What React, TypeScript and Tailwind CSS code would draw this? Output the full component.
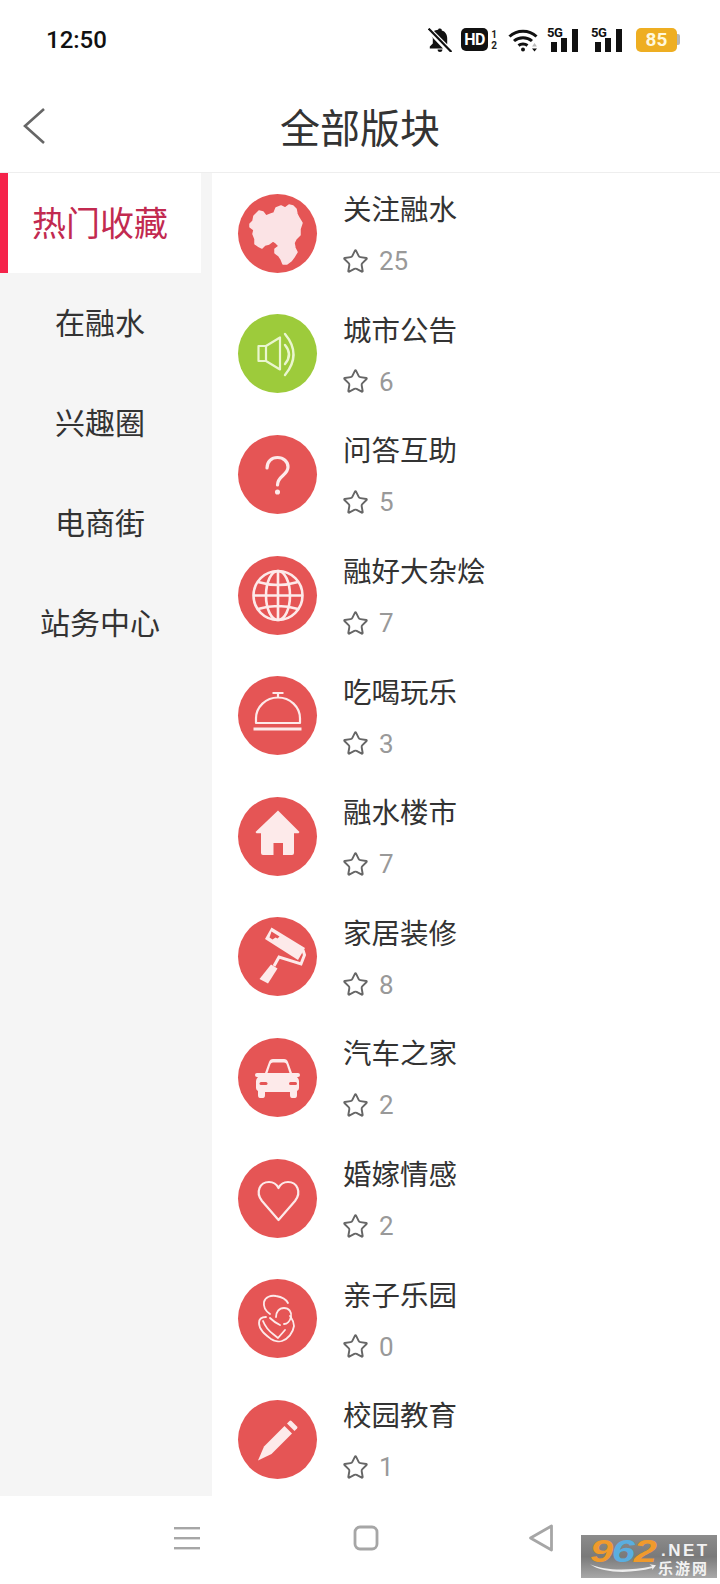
import React from 'react';
import { Star } from 'lucide-react';

const CJK = "font-['Noto_Sans_CJK_SC','Noto_Sans',sans-serif]";
const ink = '#fdeaea';

const MapIcon = () => (
  <path
    fill="#fbe3e5"
    stroke="#fbe3e5"
    strokeWidth="1.500"
    strokeLinejoin="round"
    d="M12 30L15 27 16 22 21 17 25 18 28 22 33 20 36 19 38 14 43 12 47 14 51 11 55 12 58 15 59 20 61 24 64 29 62 35 62 41 58 45 56 49 57 54 59 58 56 63 53 67 49 70 45 70 43 65 41 62 37 59 37 55 41 52 38 49 35 47 31 50 27 51 24 54 20 52 17 50 17 45 15 40 16 36 12 33z"
  />
);

const SpeakerIcon = () => (
  <g fill="none" stroke="#eaf6cf" strokeWidth="2.200">
    <path d="M20.500 32h7.500v15h-7.500zM28 32l14-8.500v32L28 47" strokeLinejoin="round" />
    <path d="M47 31q8 9.500 0 19" strokeWidth="2.400" strokeLinecap="round" />
    <path d="M47 20q17 20.500 0 41" strokeWidth="2.400" strokeLinecap="round" />
  </g>
);

const QuestionIcon = () => (
  <g fill="none" stroke={ink} strokeWidth="3.200" strokeLinecap="round">
    <path d="M29 33c0-6.500 4.500-10.500 10.500-10.500S50 26.500 50 32c0 8.500-10.500 8.500-10.500 18" />
    <circle cx="39.500" cy="57" r="1.800" fill={ink} strokeWidth="1.500" />
  </g>
);

const GlobeIcon = () => (
  <g fill="none" stroke={ink} strokeWidth="2.600">
    <circle cx="40" cy="39.500" r="24.500" />
    <ellipse cx="40" cy="39.500" rx="12" ry="24.500" />
    <path d="M40 15v49M15.500 39.500h49M20 26q20 6 40 0M20 53q20-6 40 0" />
  </g>
);

const ClocheIcon = () => (
  <g fill="none" stroke={ink} strokeWidth="2.200">
    <path d="M18 47v-4.500a22 21 0 0 1 44 0V47zM40 21.500V17M34.500 17h11" strokeLinejoin="round" />
    <path d="M15.500 53h48" strokeWidth="2.800" />
  </g>
);

const HouseIcon = () => (
  <path
    fill={ink}
    fillRule="evenodd"
    d="M40 13.500l21.500 21.500-1 1.200H56V56a2 2 0 0 1-2 2h-9V46h-9.500v12H25a2 2 0 0 1-2-2V36.200h-4.500l-1-1.200z"
  />
);

const RollerIcon = () => (
  <g fill={ink}>
    <path d="M33.500 10.500L67 31l-7 12L27 22z" />
    <path d="M33.500 14.500l8 5-2 2-2-1-3 2-3-2z" fill="#e55555" />
    <path d="M65 33l1.500 5-3.500 9L41 40l-5 9" fill="none" stroke={ink} strokeWidth="3" />
    <path d="M33 47.500l6.500 4-9.500 15-8.500-4.500z" />
  </g>
);

const CarIcon = () => (
  <g>
    <path
      fill={ink}
      d="M27 35l4-11q1-3 4-3h11q3 0 4 3l4 11h6q2 0 2 2t-2 2h-1q2 2 2 4v7q0 2-2 3v4q0 3-2 3h-3q-2 0-2-3v-3H27v3q0 3-2 3h-3q-2 0-2-3v-4q-2-1-2-3v-7q0-2 2-4h-1q-2 0-2-2t2-2z"
    />
    <path fill="#e55555" d="M29.500 35l3-9q.5-1.500 2.500-1.500h11q2 0 2.500 1.500l3 9z" />
    <rect x="21.500" y="44" width="8" height="3" rx="1.500" fill="#e55555" />
    <rect x="51" y="44" width="8" height="3" rx="1.500" fill="#e55555" />
  </g>
);

const HeartIcon = () => (
  <path
    fill="none"
    stroke={ink}
    strokeWidth="2.200"
    strokeLinejoin="round"
    d="M40.500 61L24 42C17 33 22 23 31 23c4 0 7.500 2 9.500 6 2-4 5.500-6 9.500-6 9 0 14 10 7 19z"
  />
);

const MotherIcon = () => (
  <g fill="none" stroke={ink} strokeWidth="1.800" strokeLinecap="round" strokeLinejoin="round">
    <path d="M32 35c-3-2-7-6-6-12 1-5 7-7 12-6 6 1 10 3 12 7" />
    <path d="M28 38c-4 0-7 2-7 6 0 7 7 12 12 16 3 2 8 3 11 2 6-2 11-8 12-15 0-5-2-7-4-10" />
    <path d="M25 42c2 5 6 10 10 13l5 4 7-8" />
    <path d="M38 38c0-5 3-9 8-9 5 0 8 4 7 9-1 4-4 7-7 7" />
    <path d="M32 39c3 3 6 5 10 7" />
  </g>
);

const PencilIcon = () => (
  <g fill={ink}>
    <path d="M46.500 26L54 33.500 33.500 54 20 60.500l6-14z" />
    <path d="M49 23.500l2.500-2.500q1-1 2 0l5.500 5.500q1 1 0 2L56.500 31z" />
  </g>
);

const sections = [
  { name: '关注融水', count: 25, bg: 'bg-[#e55555]', icon: <MapIcon /> },
  { name: '城市公告', count: 6, bg: 'bg-[#9dcb3b]', icon: <SpeakerIcon /> },
  { name: '问答互助', count: 5, bg: 'bg-[#e55555]', icon: <QuestionIcon /> },
  { name: '融好大杂烩', count: 7, bg: 'bg-[#e55555]', icon: <GlobeIcon /> },
  { name: '吃喝玩乐', count: 3, bg: 'bg-[#e55555]', icon: <ClocheIcon /> },
  { name: '融水楼市', count: 7, bg: 'bg-[#e55555]', icon: <HouseIcon /> },
  { name: '家居装修', count: 8, bg: 'bg-[#e55555]', icon: <RollerIcon /> },
  { name: '汽车之家', count: 2, bg: 'bg-[#e55555]', icon: <CarIcon /> },
  { name: '婚嫁情感', count: 2, bg: 'bg-[#e55555]', icon: <HeartIcon /> },
  { name: '亲子乐园', count: 0, bg: 'bg-[#e55555]', icon: <MotherIcon /> },
  { name: '校园教育', count: 1, bg: 'bg-[#e55555]', icon: <PencilIcon /> },
];

const categories = ['在融水', '兴趣圈', '电商街', '站务中心'];

const SignalIcon = () => (
  <div className="relative h-[24px] w-[34px]">
    <span className="absolute left-0 top-[-2px] font-['Roboto',sans-serif] text-[13px] font-bold leading-[14px] tracking-[-0.5px] text-[#111]">
      5G
    </span>
    <svg viewBox="0 0 34 24" className="h-[24px] w-[34px]" fill="#111">
      <rect x="4" y="14" width="6" height="10" />
      <rect x="14" y="10" width="6" height="14" />
      <rect x="25" y="1" width="6" height="23" />
    </svg>
  </div>
);

const StatusBar = () => (
  <div className="flex h-[79px] items-center bg-white pl-[46px] pr-[40px]">
    <span className="font-['Roboto',sans-serif] text-[24px] font-medium leading-none text-[#111]">12:50</span>
    <div className="ml-auto flex items-center">
      <svg viewBox="2 2 20 20" className="h-[24px] w-[24px]" fill="#111">
        <path d="M12 2.500c1 0 1.500.7 1.500 1.500 3 .8 4.500 3.500 4.500 6.500v5l-11-11c1-.5 2-.9 3.500-1 0-.8.500-1 1.500-1zM5 9l9.500 10H3.500v-1.500L6 15v-4.500zM10 20c0 1.500 1 2 2 2s2-.5 2-2z" />
        <path d="M2.500 2.500l19 19.500" stroke="#111" strokeWidth="1.800" />
      </svg>
      <div className="ml-[9px] flex h-[23px] w-[27px] items-center justify-center rounded-[5px] bg-[#111] font-['Roboto',sans-serif] text-[16px] font-bold leading-none tracking-[-0.5px] text-white">
        HD
      </div>
      <div className="ml-[3px] flex w-[6px] flex-col items-center font-['Roboto',sans-serif] text-[10px] font-bold leading-[11px] text-[#222]">
        <span>1</span>
        <span>2</span>
      </div>
      <svg viewBox="0 0 30 24" className="ml-[11px] h-[24px] w-[30px]" fill="none" stroke="#111" strokeWidth="3">
        <path d="M1.500 8.500c7.500-7 19.500-7 27 0M6 13c5-4.500 13-4.500 18 0M10.500 17.500c2.500-2 6.500-2 9 0" />
        <circle cx="15" cy="21.500" r="2" fill="#111" stroke="none" />
        <path d="M24 18.500l2.500-3.500 2.500 3.500z" fill="#bbb" stroke="none" />
        <path d="M24 20.500l2.500 3 2.500-3z" fill="#111" stroke="none" />
      </svg>
      <div className="ml-[9px]">
        <SignalIcon />
      </div>
      <div className="ml-[10px]">
        <SignalIcon />
      </div>
      <div className="ml-[11px] flex items-center">
        <div className="flex h-[24px] w-[41px] items-center justify-center rounded-[5px] bg-[#eeae22] font-['Roboto',sans-serif] text-[19px] font-bold leading-none text-[#fff8dc]">
          85
        </div>
        <div className="h-[11px] w-[3px] rounded-r-[2px] bg-[#b5b5b5]" />
      </div>
    </div>
  </div>
);

const Header = () => (
  <div className="relative flex h-[94px] items-center justify-center border-b border-[#eeeeee] bg-white">
    <svg viewBox="0 0 24 38" className="absolute left-[22px] top-[28px] h-[38px] w-[24px]" fill="none" stroke="#666" strokeWidth="2.600">
      <path d="M22 2L3 19l19 17" />
    </svg>
    <h1 className={`${CJK} text-[40px] font-normal leading-none text-[#333]`}>全部版块</h1>
  </div>
);

const Sidebar = () => (
  <div className={`${CJK} flex w-[212px] shrink-0 flex-col bg-[#f5f5f5]`}>
    <div className="flex h-[100px] w-[201px] items-center border-l-[8px] border-[#f5234a] bg-white pb-[3px] pl-[24px] text-[34px] font-normal text-[#c22a50]">
      热门收藏
    </div>
    {categories.map(name => (
      <div key={name} className="flex h-[100px] w-[200px] items-center justify-center pb-[4px] text-[30px] font-normal text-[#333]">
        {name}
      </div>
    ))}
  </div>
);

const SectionRow = ({ name, count, bg, icon }: (typeof sections)[number]) => (
  <div className="flex h-[120.6px] shrink-0 items-center pl-[26px]">
    <div className={`h-[79px] w-[79px] shrink-0 rounded-full ${bg}`}>
      <svg viewBox="0 0 79 79" className="h-[79px] w-[79px]">
        {icon}
      </svg>
    </div>
    <div className="ml-[26px] flex flex-col pb-[2px]">
      <span className={`${CJK} h-[40px] text-[28.5px] font-normal leading-[40px] text-[#333]`}>{name}</span>
      <div className="mt-[18px] flex h-[30px] items-center">
        <Star size={27} strokeWidth={1.7} color="#666" className="-ml-[1px]" />
        <span className="ml-[10px] font-['Roboto',sans-serif] text-[26px] font-normal leading-none text-[#999]">
          {count}
        </span>
      </div>
    </div>
  </div>
);

const NavBar = () => (
  <div className="relative flex h-[88px] items-center bg-white">
    <svg viewBox="0 0 26 24" className="ml-[174px] mt-[-5px] h-[24px] w-[26px]" fill="#a6a6a6">
      <rect y="1" width="26" height="2.400" />
      <rect y="11" width="26" height="2.400" />
      <rect y="21" width="26" height="2.400" />
    </svg>
    <svg viewBox="0 0 26 26" className="ml-[153px] mt-[-5px] h-[26px] w-[26px]" fill="none" stroke="#a6a6a6" strokeWidth="2.800">
      <rect x="2" y="2" width="22" height="22" rx="5" />
    </svg>
    <svg viewBox="0 0 26 28" className="ml-[149px] mt-[-5px] h-[28px] w-[26px]" fill="none" stroke="#a6a6a6" strokeWidth="2.800" strokeLinejoin="round">
      <path d="M2.500 14L23.500 2v24z" />
    </svg>
    {/* site badge in the corner of the nav bar */}
    <div className="absolute left-[581px] top-[39px] h-[43px] w-[136px] bg-gradient-to-b from-[#8c8c8c] via-[#7a7a7a] to-[#a8a8a8]">
      <span className="absolute left-[9px] top-0 origin-left scale-x-[1.3] font-['Liberation_Sans',sans-serif] text-[32px] font-bold italic leading-[32px] tracking-[-1px] text-[#f09a2c]">
        9<span className="text-[#5aaee0]">6</span>2
      </span>
      <span className="absolute left-[80px] top-[7px] font-['Liberation_Sans',sans-serif] text-[17px] font-bold leading-[18px] tracking-[2.5px] text-[#f2f2f2]">
        .NET
      </span>
      <span className={`${CJK} absolute left-[77px] top-[25px] text-[15px] font-bold leading-[16px] tracking-[2px] text-[#f2f2f2]`}>
        乐游网
      </span>
      <svg viewBox="0 0 70 12" className="absolute left-[9px] top-[28px] h-[12px] w-[66px]" fill="#eeeeee">
        <path d="M0 1c16 7 42 7 66 2l-3-2 7 1-4 5 0-2C44 11 14 11 0 1z" />
      </svg>
    </div>
  </div>
);

export default function App() {
  return (
    <div className="flex h-[1584px] w-[720px] flex-col overflow-hidden bg-white">
      <StatusBar />
      <Header />
      <div className="flex h-[1323px] overflow-hidden">
        <Sidebar />
        <div className="flex min-w-0 flex-1 flex-col overflow-hidden bg-white">
          {sections.map(section => (
            <SectionRow key={section.name} {...section} />
          ))}
        </div>
      </div>
      <NavBar />
    </div>
  );
}
